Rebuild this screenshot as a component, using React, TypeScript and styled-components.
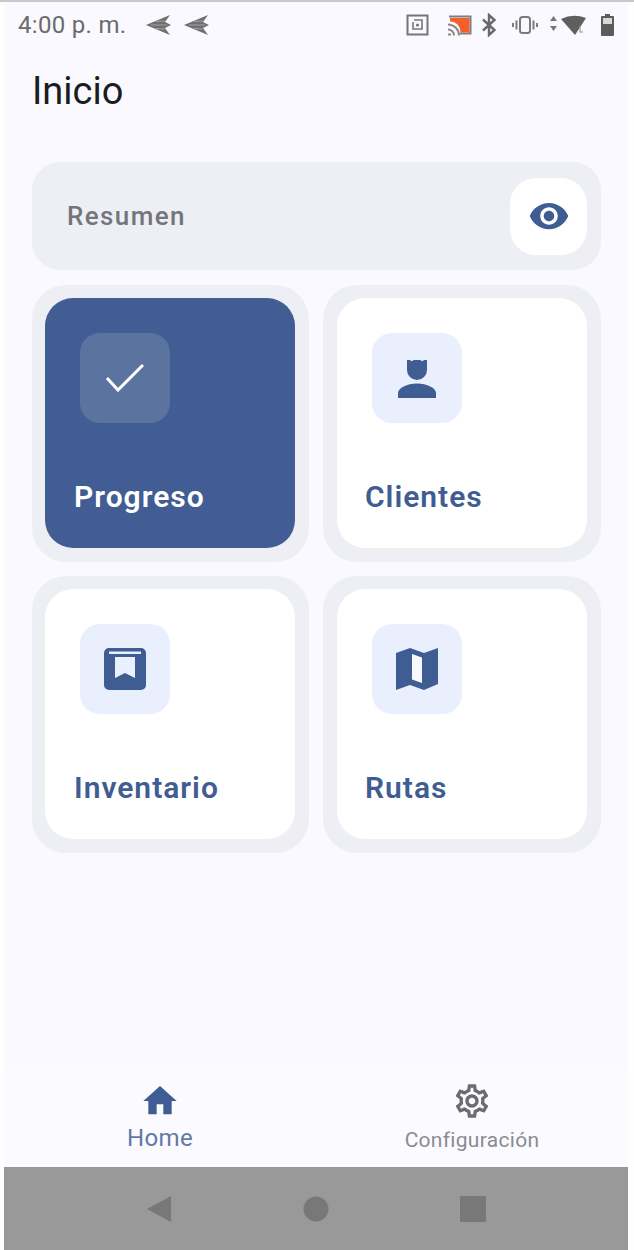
import React from "react";
import styled, { createGlobalStyle } from "styled-components";
import { MdHome, MdOutlineSettings, MdVisibility } from "react-icons/md";

const Global = createGlobalStyle`
  html, body { margin: 0; padding: 0; background: #fefefe; }
  body { font-family: Roboto, "Liberation Sans", sans-serif; }
`;

const primary = "#3f5d92";

const Page = styled.div`
  width: 634px;
  height: 1250px;
  display: flex;
  flex-direction: column;
  overflow: hidden;
`;
const TopEdge = styled.div`
  height: 2px;
  flex: none;
  background: #c9c9cb;
`;
const Screen = styled.div`
  width: 624px;
  margin-left: 4px;
  flex: 1;
  display: flex;
  flex-direction: column;
  background: #f9f9ff;
`;
const StatusBar = styled.div`
  height: 46px;
  flex: none;
  display: flex;
  align-items: center;
  padding: 0 14px;
  color: #6b6b6b;
`;
const StatusLeft = styled.div`
  display: flex;
  align-items: center;
  gap: 13px;
  flex: 1;
`;
const Time = styled.span`
  font-size: 24px;
  letter-spacing: 0.3px;
  margin-right: 7px;
`;
const StatusRight = styled.div`
  display: flex;
  align-items: center;
  margin-right: -1px;
`;
const StatusGap = styled.span<{ $w: number }>`
  width: ${(p) => p.$w}px;
`;
const Title = styled.h1`
  margin: 20px 0 0 28px;
  font-size: 38px;
  line-height: 46px;
  font-weight: 400;
  color: #1b1c20;
`;
const Main = styled.main`
  margin-top: 48px;
  padding: 0 27px 0 28px;
  display: flex;
  flex-direction: column;
  gap: 15px;
`;
const Summary = styled.div`
  height: 108px;
  border-radius: 28px;
  background: #eeeef5;
  display: flex;
  align-items: center;
  justify-content: space-between;
  padding: 0 14px 0 35px;
`;
const SummaryLabel = styled.span`
  font-size: 26px;
  font-weight: 500;
  color: #74757c;
  letter-spacing: 1.4px;
`;
const EyeButton = styled.div`
  width: 77px;
  height: 77px;
  border-radius: 26px;
  background: #fff;
  display: flex;
  align-items: center;
  justify-content: center;
  color: ${primary};
`;
const Grid = styled.div`
  display: grid;
  grid-template-columns: 277px 278px;
  grid-auto-rows: 277px;
  gap: 14px;
`;
const Tile = styled.div<{ $right?: boolean }>`
  background: #eeeef5;
  border-radius: 34px;
  padding: 13px 14px 14px ${(p) => (p.$right ? "14px" : "13px")};
  display: flex;
`;
const Card = styled.div<{ $active?: boolean; $right?: boolean }>`
  flex: 1;
  border-radius: 28px;
  background: ${(p) => (p.$active ? "#415d93" : "#fff")};
  color: ${(p) => (p.$active ? "#fff" : primary)};
  padding: 35px 28px 0 ${(p) => (p.$right ? "28px" : "29px")};
  display: flex;
  flex-direction: column;
  align-items: flex-start;
`;
const IconBox = styled.div<{ $active?: boolean; $right?: boolean }>`
  width: 90px;
  height: 90px;
  margin-left: ${(p) => (p.$right ? "7px" : "6px")};
  border-radius: 20px;
  background: ${(p) => (p.$active ? "#5a749f" : "#e9effc")};
  display: flex;
  align-items: center;
  justify-content: center;
`;
const CardLabel = styled.span`
  margin-top: 56px;
  font-size: 30px;
  line-height: 36px;
  font-weight: 600;
  letter-spacing: 1px;
`;
const BottomNav = styled.nav`
  margin-top: auto;
  height: 100px;
  flex: none;
  display: grid;
  grid-template-columns: 1fr 1fr;
  background: #fbfaff;
`;
const NavItem = styled.div<{ $active?: boolean }>`
  display: flex;
  flex-direction: column;
  align-items: center;
  padding-top: 14px;
  color: ${(p) => (p.$active ? primary : "#6b6c72")};
`;
const NavLabel = styled.span<{ $active?: boolean }>`
  font-size: ${(p) => (p.$active ? "24px" : "21px")};
  letter-spacing: ${(p) => (p.$active ? "0.4px" : "0.3px")};
  line-height: 26px;
  margin-top: ${(p) => (p.$active ? "4px" : "6px")};
  color: ${(p) => (p.$active ? "#6279a6" : "#8b8c91")};
`;
const SystemRow = styled.div`
  height: 83px;
  flex: none;
  background: #999;
  display: flex;
  align-items: center;
  justify-content: center;
  gap: 131px;
`;
const SysSlot = styled.div`
  display: flex;
  align-items: center;
  justify-content: center;
  width: 26px;
  height: 28px;
`;

const Plane = () => (
  <svg width="25" height="20" viewBox="0 0 25 20">
    <path d="M0 10 24 0 19 7 25 10 19 13 24 20Z" fill="#6f6f6f" />
    <path d="M5 10H21M10 6.500 19 6M10 13.500 19 14" stroke="#a3a3a3" strokeWidth="1.200" />
  </svg>
);
const Nfc = () => (
  <svg width="23" height="22" viewBox="0 0 23 22" fill="none" stroke="#777">
    <rect x="1.500" y="1.500" width="20" height="19" strokeWidth="2" />
    <path d="M8 6h8v9H7V8" strokeWidth="1.600" />
    <circle cx="11.500" cy="11" r="1.600" fill="#777" stroke="none" />
  </svg>
);
const Cast = () => (
  <svg width="25" height="21" viewBox="0 0 25 21" fill="none">
    <path d="M2 1.500H23.500V18.500H13" stroke="#7f7f7f" strokeWidth="2" />
    <path d="M3 3H22.500V17.500H13.500C13.500 11 9 6.500 3 6.500Z" fill="#f4602b" />
    <path d="M1 19.500h3M1 14.500a6 6 0 0 1 6 6M1 9.500a11 11 0 0 1 11 11" stroke="#8a8a8a" strokeWidth="2" />
  </svg>
);
const Bluetooth = () => (
  <svg width="16" height="24" viewBox="0 0 16 24" fill="none" stroke="#6a6a6a" strokeWidth="2.400">
    <path d="M2 6.500 13.500 17 8 22V2l5.500 5L2 17.500" />
  </svg>
);
const Vibrate = () => (
  <svg width="26" height="20" viewBox="0 0 26 20" fill="none" stroke="#7c7c7c" strokeWidth="2">
    <rect x="8" y="2" width="10" height="16" rx="2.500" />
    <path d="M4.500 5.500v9M21.500 5.500v9M1 8v4M25 8v4" />
  </svg>
);
const Signal = () => (
  <svg width="37" height="22" viewBox="0 0 37 22">
    <path d="M1 7 4.500 2 8 7ZM1 12 4.500 17 8 12Z" fill="#777" />
    <path d="M12 5Q24-1 37 4L26 21Z" fill="#5f5f5f" />
    <path d="M31 12v6h3" stroke="#9a9a9a" strokeWidth="1.200" fill="none" />
  </svg>
);
const Battery = () => (
  <svg width="15" height="24" viewBox="0 0 15 24">
    <path d="M5 1h5v2h3a1 1 0 0 1 1 1v18a1 1 0 0 1-1 1H2a1 1 0 0 1-1-1V4a1 1 0 0 1 1-1h3Z" fill="#5c5c5c" />
    <rect x="3" y="5" width="9" height="6" fill="#d8d8da" />
  </svg>
);
const CheckIcon = () => (
  <svg width="38" height="28" viewBox="0 0 38 28" fill="none" stroke="currentColor" strokeWidth="3">
    <path d="M1 14 12 26 37 1" />
  </svg>
);
const PersonIcon = () => (
  <svg width="40" height="40" viewBox="0 0 40 40" fill="currentColor">
    <path d="M10 2h3l1.500 1.200L17 2h6l2.500 1.200L27 2h3v10a10 10 0 0 1-20 0Z" />
    <path d="M1 40v-5c0-5 9-9.500 19-9.500S39 30 39 35v5Z" />
  </svg>
);
const BookIcon = () => (
  <svg width="44" height="44" viewBox="0 0 44 44">
    <path
      fill="currentColor"
      fillRule="evenodd"
      d="M6 1h32a5 5 0 0 1 5 5v32a5 5 0 0 1-5 5H6a5 5 0 0 1-5-5V6a5 5 0 0 1 5-5ZM6 4.500V7h32V4.500ZM12 10v21l10-5 10 5V10Z"
    />
  </svg>
);
const MapIcon = () => (
  <svg width="44" height="44" viewBox="0 0 44 44">
    <path fill="currentColor" d="M1 6 15 1 29 6 43 1V37L29 43 15 38 1 43Z" />
    <path fill="#f6f8fe" d="M17 7 27 10.500V36L17 32.500Z" />
  </svg>
);

export default function App() {
  return (
    <Page>
      <Global />
      <TopEdge />
      <Screen>
        <StatusBar>
          <StatusLeft>
            <Time>4:00 p. m.</Time>
            <Plane />
            <Plane />
          </StatusLeft>
          <StatusRight>
            <Nfc />
            <StatusGap $w={18} />
            <Cast />
            <StatusGap $w={9} />
            <Bluetooth />
            <StatusGap $w={15} />
            <Vibrate />
            <StatusGap $w={11} />
            <Signal />
            <StatusGap $w={14} />
            <Battery />
          </StatusRight>
        </StatusBar>
        <Title>Inicio</Title>
        <Main>
          <Summary>
            <SummaryLabel>Resumen</SummaryLabel>
            <EyeButton>
              <MdVisibility size={42} />
            </EyeButton>
          </Summary>
          <Grid>
            <Tile>
              <Card $active>
                <IconBox $active>
                  <CheckIcon />
                </IconBox>
                <CardLabel>Progreso</CardLabel>
              </Card>
            </Tile>
            <Tile $right>
              <Card $right>
                <IconBox $right>
                  <PersonIcon />
                </IconBox>
                <CardLabel>Clientes</CardLabel>
              </Card>
            </Tile>
            <Tile>
              <Card>
                <IconBox>
                  <BookIcon />
                </IconBox>
                <CardLabel>Inventario</CardLabel>
              </Card>
            </Tile>
            <Tile $right>
              <Card $right>
                <IconBox $right>
                  <MapIcon />
                </IconBox>
                <CardLabel>Rutas</CardLabel>
              </Card>
            </Tile>
          </Grid>
        </Main>
        <BottomNav>
          <NavItem $active>
            <MdHome size={40} />
            <NavLabel $active>Home</NavLabel>
          </NavItem>
          <NavItem>
            <MdOutlineSettings size={40} />
            <NavLabel>Configuración</NavLabel>
          </NavItem>
        </BottomNav>
        <SystemRow>
          <SysSlot>
            <svg width="26" height="28" viewBox="0 0 26 28">
              <path d="M25 1V27L1 14Z" fill="#787878" />
            </svg>
          </SysSlot>
          <SysSlot>
            <svg width="26" height="26" viewBox="0 0 26 26">
              <circle cx="13" cy="13" r="12.500" fill="#787878" />
            </svg>
          </SysSlot>
          <SysSlot>
            <svg width="26" height="28" viewBox="0 0 26 28">
              <rect x="0" y="1" width="26" height="26" rx="1" fill="#787878" />
            </svg>
          </SysSlot>
        </SystemRow>
      </Screen>
    </Page>
  );
}
